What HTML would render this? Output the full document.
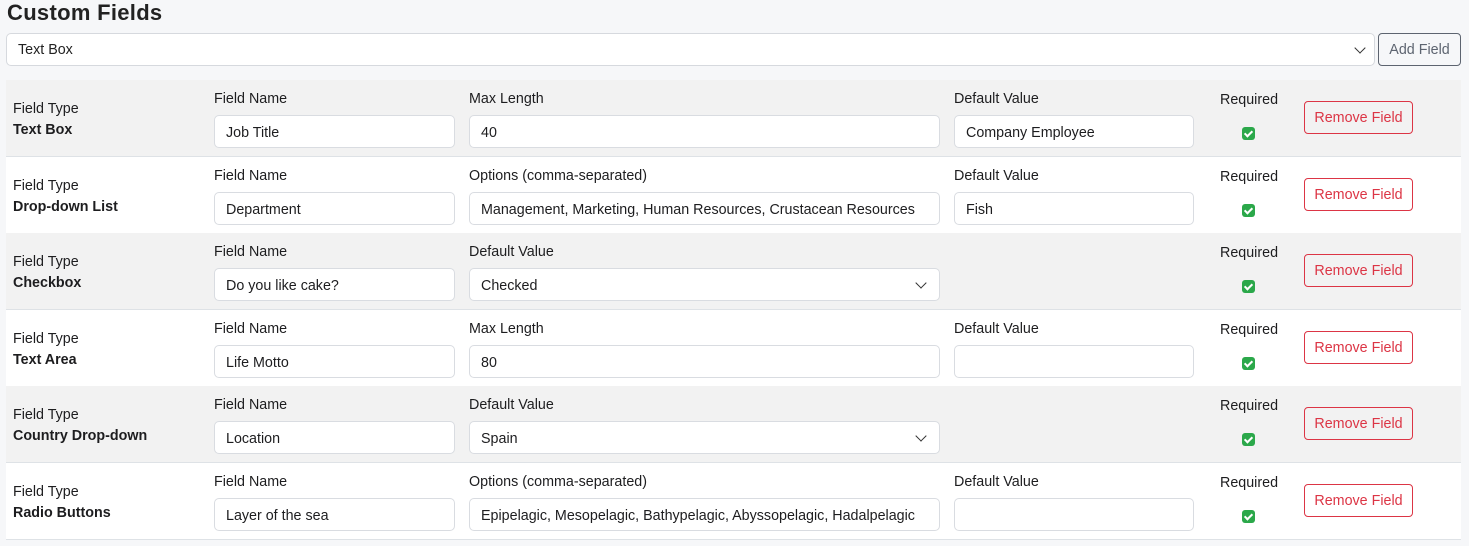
<!DOCTYPE html>
<html><head><meta charset="utf-8"><style>
*{box-sizing:border-box;margin:0;padding:0}
body{width:1469px;height:546px;background:#f6f7f9;font-family:"Liberation Sans",sans-serif;font-size:14.3px;color:#1d1d1f;position:relative;overflow:hidden}
h1{position:absolute;left:7px;top:0px;font-size:22px;font-weight:bold;color:#222;letter-spacing:0.3px}
.sel{position:absolute;left:6px;top:33px;width:1369px;height:33px;background:#fff;border:1px solid #d6d9de;border-radius:5px;padding:8px 11px;color:#222}
.chev{position:absolute;width:8px;height:8px;border-right:1.5px solid #333;border-bottom:1.5px solid #333;transform:rotate(45deg)}
.add{position:absolute;left:1378px;top:33px;width:83px;height:33px;border:1px solid #5d6470;border-radius:4px;color:#5d6470;text-align:center;line-height:32px;background:#f6f7f9}
.row{position:absolute;left:6px;width:1455px;height:77px;border-bottom:1px solid #dee2e6}
.g{background:#f2f2f2}.w{background:#fff}
.row div{position:absolute}
.lb{top:11px;white-space:nowrap}
.in{top:35px;height:33px;background:#fff;border:1px solid #d9dce1;border-radius:5px;padding:9px 11px 0;white-space:nowrap;overflow:hidden}
.ft{left:7px;top:19px;line-height:21px}
.ck{left:1236px;top:47px;width:13px;height:13px;background:#2ba84a;border-radius:3px}
.ck:after{content:"";position:absolute;left:4px;top:2px;width:3px;height:6px;border-right:2px solid #fff;border-bottom:2px solid #fff;transform:rotate(45deg)}
.rb{left:1298px;top:21px;width:109px;height:33px;border:1px solid #dc3545;border-radius:4px;color:#dc3545;text-align:center;line-height:33px}
</style></head><body>
<h1>Custom Fields</h1>
<div class="sel">Text Box<span class="chev" style="left:1349px;top:10px"></span></div>
<div class="add">Add Field</div>

<div class="row g" style="top:80px">
<div class="ft">Field Type<br><b>Text Box</b></div>
<div class="lb" style="left:208px">Field Name</div><div class="in" style="left:208px;width:241px">Job Title</div>
<div class="lb" style="left:463px">Max Length</div><div class="in" style="left:463px;width:471px">40</div>
<div class="lb" style="left:948px">Default Value</div><div class="in" style="left:948px;width:240px">Company Employee</div>
<div class="lb" style="left:1214px;top:12px">Required</div><div class="ck"></div><div class="rb">Remove Field</div>
</div>
<div class="row w" style="top:157px">
<div class="ft">Field Type<br><b>Drop-down List</b></div>
<div class="lb" style="left:208px">Field Name</div><div class="in" style="left:208px;width:241px">Department</div>
<div class="lb" style="left:463px">Options (comma-separated)</div><div class="in" style="left:463px;width:471px">Management, Marketing, Human Resources, Crustacean Resources</div>
<div class="lb" style="left:948px">Default Value</div><div class="in" style="left:948px;width:240px">Fish</div>
<div class="lb" style="left:1214px;top:12px">Required</div><div class="ck"></div><div class="rb">Remove Field</div>
</div>
<div class="row g" style="top:233px">
<div class="ft">Field Type<br><b>Checkbox</b></div>
<div class="lb" style="left:208px">Field Name</div><div class="in" style="left:208px;width:241px">Do you like cake?</div>
<div class="lb" style="left:463px">Default Value</div><div class="in" style="left:463px;width:471px">Checked<span class="chev" style="left:447px;top:10px"></span></div>
<div class="lb" style="left:1214px;top:12px">Required</div><div class="ck"></div><div class="rb">Remove Field</div>
</div>
<div class="row w" style="top:310px">
<div class="ft">Field Type<br><b>Text Area</b></div>
<div class="lb" style="left:208px">Field Name</div><div class="in" style="left:208px;width:241px">Life Motto</div>
<div class="lb" style="left:463px">Max Length</div><div class="in" style="left:463px;width:471px">80</div>
<div class="lb" style="left:948px">Default Value</div><div class="in" style="left:948px;width:240px"></div>
<div class="lb" style="left:1214px;top:12px">Required</div><div class="ck"></div><div class="rb">Remove Field</div>
</div>
<div class="row g" style="top:386px">
<div class="ft">Field Type<br><b>Country Drop-down</b></div>
<div class="lb" style="left:208px">Field Name</div><div class="in" style="left:208px;width:241px">Location</div>
<div class="lb" style="left:463px">Default Value</div><div class="in" style="left:463px;width:471px">Spain<span class="chev" style="left:447px;top:10px"></span></div>
<div class="lb" style="left:1214px;top:12px">Required</div><div class="ck"></div><div class="rb">Remove Field</div>
</div>
<div class="row w" style="top:463px">
<div class="ft">Field Type<br><b>Radio Buttons</b></div>
<div class="lb" style="left:208px">Field Name</div><div class="in" style="left:208px;width:241px">Layer of the sea</div>
<div class="lb" style="left:463px">Options (comma-separated)</div><div class="in" style="left:463px;width:471px">Epipelagic, Mesopelagic, Bathypelagic, Abyssopelagic, Hadalpelagic</div>
<div class="lb" style="left:948px">Default Value</div><div class="in" style="left:948px;width:240px"></div>
<div class="lb" style="left:1214px;top:12px">Required</div><div class="ck"></div><div class="rb">Remove Field</div>
</div>
</body></html>
